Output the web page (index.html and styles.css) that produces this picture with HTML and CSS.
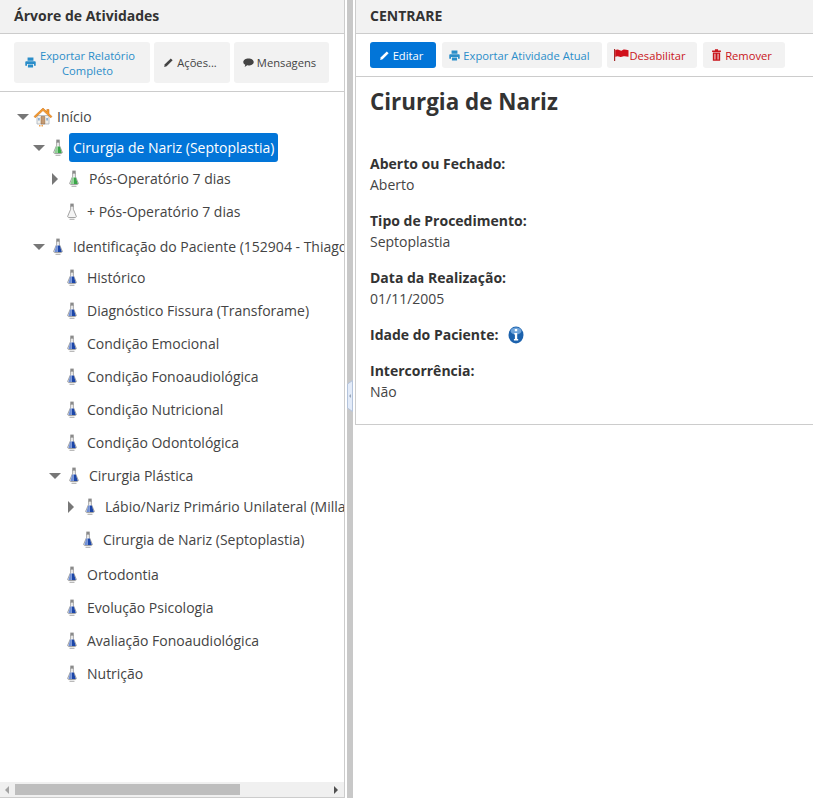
FILE: index.html
```html
<!DOCTYPE html>
<html lang="pt-BR">
<head>
  <meta charset="UTF-8">
  <title>Árvore de Atividades</title>
  <meta name="viewport" content="width=device-width, initial-scale=1.0">
  <link rel="stylesheet" href="styles.css">
</head>
<body>
  <svg class="defs" width="0" height="0">
    <symbol id="i-print" viewBox="0 0 12 12">
      <path d="M2.800.5h6.400v3.500H2.800zM1.300 4.500h9.400a1 1 0 0 1 1 1v4H9.800V7.500H2.200v2H.3v-4a1 1 0 0 1 1-1zM3.200 8.300h5.600v3.200H3.200z" fill="currentColor"/>
    </symbol>
    <symbol id="i-pencil" viewBox="0 0 12 12">
      <path d="M8.500 1.500l2 2L4 10 1.200 10.800 2 8z" fill="currentColor"/>
    </symbol>
    <symbol id="i-comment" viewBox="0 0 12 12">
      <path d="M6 1.500c3.100 0 5.700 1.600 5.700 3.900S9.100 9.200 6 9.200c-.5 0-1 0-1.400-.1L1.800 11l.7-2.500C1.100 7.800.3 6.700.3 5.400.3 3.100 2.900 1.500 6 1.500z" fill="currentColor"/>
    </symbol>
    <symbol id="i-trash" viewBox="0 0 12 13">
      <path d="M4.300.3h3.400v1.200h3.100v1.800H1.200V1.500h3.100zM2 3.900h8V12.700H2zM3.800 5.200v6.300h1V5.200zm3.400 0v6.300h1V5.200z" fill="currentColor" fill-rule="evenodd"/>
    </symbol>
    <symbol id="i-flag" viewBox="0 0 15 12">
      <path d="M0 0h1.200v12H0z" fill="#a52a2a"/>
      <path d="M1.200 1.200c1.500-.8 3-.8 4.500 0s2 .5 3-.2 2.800-.6 5.800.3V7.800c-3-.8-4.500-.8-5.800-.2s-2 .7-3 .1-3-.8-4.500.1z" fill="#d0101a"/>
    </symbol>
    <symbol id="i-flask" viewBox="0 0 12 18">
      <path d="M4.700 3h2.600v3.200L10.200 13c.3.800-.1 1.500-.9 1.500H2.700c-.8 0-1.200-.7-.9-1.500l2.900-6.800z" fill="#f4f4f4" stroke="#999" stroke-width=".9"/>
      <path d="M4.300.6h3.400v2.800H4.300z" fill="#8a8a8a"/>
      <path d="M3.500 15.700h5v1.200h-5z" fill="#b3b3b3"/>
    </symbol>
    <symbol id="i-flask-green" viewBox="0 0 12 18">
      <use href="#i-flask"/>
      <path d="M5.600 7.500h2.200l2 6.500H5.600z" fill="#3aa648"/>
      <path d="M4.200 7.500h1.400v6.500H2.400z" fill="#8fcf93"/>
    </symbol>
    <symbol id="i-flask-blue" viewBox="0 0 12 18">
      <use href="#i-flask"/>
      <path d="M5.600 7.500h2.200l2 6.500H5.600z" fill="#1c46a8"/>
      <path d="M4.200 7.500h1.400v6.500H2.400z" fill="#6f8fd6"/>
    </symbol>
    <symbol id="i-home" viewBox="0 0 20 20">
      <path d="M4 8.500h12V17H4z" fill="#f3f1ec" stroke="#a8b3bd" stroke-width=".8"/>
      <path d="M10 1L1 9.500l1.200 1.300L10 3.600l7.800 7.200L19 9.500l-3-2.800V2.500h-2.200v2.100z" fill="#f39a2e" stroke="#c9690f" stroke-width=".5"/>
      <path d="M8 9.500h3.800V17H8z" fill="#c49a73" stroke="#8c6239" stroke-width=".5"/>
      <path d="M5 11h1.800v2.500H5zM13.200 11H15v2.500h-1.800z" fill="#8fb1d6"/>
      <path d="M6 18h1.500v1.500H6zM8.500 18H10v1.500H8.500z" fill="#f2a34d"/>
    </symbol>
    <symbol id="i-info" viewBox="0 0 16 18">
      <ellipse cx="8" cy="9" rx="7.500" ry="8.500" fill="#1c62ad"/>
      <ellipse cx="8" cy="5" rx="5.500" ry="3.500" fill="#6fa4da"/>
      <path d="M6.800 3h2.400v2.200H6.800zM6.300 7h2.900v6h1v1.500H5.900V13h1V8.500h-.6z" fill="#fff"/>
    </symbol>
  </svg>

  <div class="layout">
    <div class="left-pane">
      <div class="pane-title">Árvore de Atividades</div>
      <div class="toolbar left-toolbar">
        <a class="btn btn-info btn-wide"><svg class="icon"><use href="#i-print"/></svg><span>Exportar Relatório<br>Completo</span></a>
        <a class="btn btn-acoes"><svg class="icon"><use href="#i-pencil"/></svg>Ações...</a>
        <a class="btn btn-msg"><svg class="icon"><use href="#i-comment"/></svg>Mensagens</a>
      </div>

      <div class="tree">
        <ul class="nodes root">
          <li>
            <div class="row"><i class="caret-down"></i><svg class="home"><use href="#i-home"/></svg><span class="label">Início</span></div>
            <ul class="nodes">
              <li>
                <div class="row"><i class="caret-down"></i><svg class="flask"><use href="#i-flask-green"/></svg><span class="label selected">Cirurgia de Nariz (Septoplastia)</span></div>
                <ul class="nodes">
                  <li><div class="row"><i class="caret-right"></i><svg class="flask"><use href="#i-flask-green"/></svg><span class="label">Pós-Operatório 7 dias</span></div></li>
                  <li><div class="row"><i class="leaf"></i><svg class="flask"><use href="#i-flask"/></svg><span class="label">+ Pós-Operatório 7 dias</span></div></li>
                </ul>
              </li>
              <li>
                <div class="row"><i class="caret-down"></i><svg class="flask"><use href="#i-flask-blue"/></svg><span class="label">Identificação do Paciente (152904 - Thiago</span></div>
                <ul class="nodes">
                  <li><div class="row"><i class="leaf"></i><svg class="flask"><use href="#i-flask-blue"/></svg><span class="label">Histórico</span></div></li>
                  <li><div class="row"><i class="leaf"></i><svg class="flask"><use href="#i-flask-blue"/></svg><span class="label">Diagnóstico Fissura (Transforame)</span></div></li>
                  <li><div class="row"><i class="leaf"></i><svg class="flask"><use href="#i-flask-blue"/></svg><span class="label">Condição Emocional</span></div></li>
                  <li><div class="row"><i class="leaf"></i><svg class="flask"><use href="#i-flask-blue"/></svg><span class="label">Condição Fonoaudiológica</span></div></li>
                  <li><div class="row"><i class="leaf"></i><svg class="flask"><use href="#i-flask-blue"/></svg><span class="label">Condição Nutricional</span></div></li>
                  <li><div class="row"><i class="leaf"></i><svg class="flask"><use href="#i-flask-blue"/></svg><span class="label">Condição Odontológica</span></div></li>
                  <li>
                    <div class="row"><i class="caret-down"></i><svg class="flask"><use href="#i-flask-blue"/></svg><span class="label">Cirurgia Plástica</span></div>
                    <ul class="nodes">
                      <li><div class="row"><i class="caret-right"></i><svg class="flask"><use href="#i-flask-blue"/></svg><span class="label">Lábio/Nariz Primário Unilateral (Milla</span></div></li>
                      <li><div class="row"><i class="leaf"></i><svg class="flask"><use href="#i-flask-blue"/></svg><span class="label">Cirurgia de Nariz (Septoplastia)</span></div></li>
                    </ul>
                  </li>
                  <li><div class="row"><i class="leaf"></i><svg class="flask"><use href="#i-flask-blue"/></svg><span class="label">Ortodontia</span></div></li>
                  <li><div class="row"><i class="leaf"></i><svg class="flask"><use href="#i-flask-blue"/></svg><span class="label">Evolução Psicologia</span></div></li>
                  <li><div class="row"><i class="leaf"></i><svg class="flask"><use href="#i-flask-blue"/></svg><span class="label">Avaliação Fonoaudiológica</span></div></li>
                  <li><div class="row"><i class="leaf"></i><svg class="flask"><use href="#i-flask-blue"/></svg><span class="label">Nutrição</span></div></li>
                </ul>
              </li>
            </ul>
          </li>
        </ul>
      </div>

      <div class="hscroll">
        <i class="scroll-left"></i>
        <div class="scroll-track"><div class="scroll-thumb"></div></div>
        <i class="scroll-right"></i>
      </div>
    </div>

    <div class="splitter">
      <svg class="split-handle" viewBox="0 0 6 32">
        <path d="M.5 4L5.500.5v31L.5 28z" fill="#e3ebf8" stroke="#b4c4dc"/>
        <path d="M2 16l2-2v4z" fill="#9aa7b8"/>
      </svg>
    </div>

    <div class="right-pane">
      <div class="pane-title">CENTRARE</div>
      <div class="toolbar right-toolbar">
        <a class="btn btn-primary"><svg class="icon"><use href="#i-pencil"/></svg>Editar</a>
        <a class="btn btn-info"><svg class="icon"><use href="#i-print"/></svg>Exportar Atividade Atual</a>
        <a class="btn btn-danger"><svg class="icon-flag"><use href="#i-flag"/></svg>Desabilitar</a>
        <a class="btn btn-danger"><svg class="icon-trash"><use href="#i-trash"/></svg>Remover</a>
      </div>
      <div class="details">
        <h1>Cirurgia de Nariz</h1>
        <div class="field"><strong>Aberto ou Fechado:</strong><p>Aberto</p></div>
        <div class="field"><strong>Tipo de Procedimento:</strong><p>Septoplastia</p></div>
        <div class="field"><strong>Data da Realização:</strong><p>01/11/2005</p></div>
        <div class="field field-inline"><strong>Idade do Paciente:</strong><svg class="info"><use href="#i-info"/></svg></div>
        <div class="field"><strong>Intercorrência:</strong><p>Não</p></div>
      </div>
    </div>
  </div>
</body>
</html>
```

FILE: styles.css
```css
* { box-sizing: border-box; }
html, body { height: 100%; }
body { margin: 0; font-family: "Open Sans", sans-serif; font-size: 14px; color: #333; background: #fff; overflow: hidden; }
.defs { position: absolute; }

.layout { display: flex; align-items: flex-start; height: 798px; }
.left-pane { width: 345px; height: 798px; display: flex; flex-direction: column; border-right: 1px solid #ccc; border-bottom: 1px solid #ccc; }
.right-pane { flex: 1; min-width: 0; border-left: 1px solid #ccc; border-bottom: 1px solid #ccc; height: 425px; }

.splitter { position: relative; width: 6px; height: 798px; margin: 0 2px; background: #c8c8c8; }
.split-handle { position: absolute; left: 0; top: 380px; width: 6px; height: 32px; }

.pane-title { height: 34px; padding: 0 14px; line-height: 32px; font-weight: 700; font-size: 14px; background: #f2f2f2; border-bottom: 1px solid #ccc; }

.toolbar { display: flex; gap: 4px; border-bottom: 1px solid #ccc; }
.left-toolbar { height: 58px; padding: 8px 14px; }
.right-toolbar { height: 43px; padding: 8px 14px; gap: 5.5px; }

.btn { display: flex; align-items: center; justify-content: center; height: 26px; padding: 0 10px 0 6px; background: #f2f2f2; border-radius: 3px; font-size: 11.2px; color: #444; line-height: 15px; white-space: nowrap; }
.left-toolbar .btn { height: 41px; }
.btn-wide { width: 136px; }
.btn-wide span { text-align: center; }
.btn-acoes { width: 76px; }
.btn-msg { width: 95px; }
.btn-primary { width: 66px; background: #0275d8; color: #fff; }
.btn-info { color: #2a8dc9; }
.btn-danger { color: #c9151b; }
.right-toolbar .btn-info { width: 160px; }
.right-toolbar .btn-danger { width: 90px; }
.right-toolbar .btn-danger:last-child { width: 82px; }

.icon { width: 11px; height: 11px; margin-right: 3px; flex: none; }
.btn-wide .icon { margin-right: 4px; }
.icon-flag { width: 15px; height: 12px; flex: none; }
.icon-trash { width: 11px; height: 12px; margin-right: 3px; flex: none; }

.tree { flex: 1; min-height: 0; overflow: hidden; padding: 8px 0 0 17px; }
.nodes { list-style: none; margin: -2px 0 2px; padding: 0 0 0 16px; }
.root { margin: 0; padding: 0; }
.row { display: flex; align-items: center; height: 33px; white-space: nowrap; }
.caret-down { flex: none; width: 16px; height: 6px; position: relative; }
.caret-down::before { content: ""; position: absolute; left: 0; top: 0; border-style: solid; border-width: 6px 6px 0; border-color: #777 transparent transparent; }
.caret-right { flex: none; width: 16px; height: 12px; position: relative; }
.caret-right::before { content: ""; position: absolute; left: 3px; top: 0; border-style: solid; border-width: 6px 0 6px 6px; border-color: transparent transparent transparent #777; }
.leaf { flex: none; width: 14px; }
.home { flex: none; width: 20px; height: 20px; }
.flask { flex: none; width: 12px; height: 18px; margin: 0 5px 0 3px; }
.label { padding: 0 4px; line-height: 29px; color: #444; }
.label.selected { background: #0275d8; color: #fff; border-radius: 3px; }

.hscroll { display: flex; align-items: center; height: 15px; flex: none; background: #f0f0f0; }
.scroll-left { flex: none; width: 15px; height: 8px; position: relative; }
.scroll-left::before { content: ""; position: absolute; left: 5px; top: 0; border-style: solid; border-width: 4px 4px 4px 0; border-color: transparent #a3a3a3 transparent transparent; }
.scroll-right { flex: none; width: 15px; height: 8px; position: relative; }
.scroll-right::before { content: ""; position: absolute; left: 5px; top: 0; border-style: solid; border-width: 4px 0 4px 4px; border-color: transparent transparent transparent #505050; }
.scroll-track { flex: 1; height: 11px; }
.scroll-thumb { width: 225px; height: 11px; background: #bebebe; }

.details { padding: 0 14px; }
h1 { margin: 0; padding: 8px 0 0; font-size: 22.4px; line-height: 34px; font-weight: 700; color: #333; }
.field { margin-bottom: 15px; line-height: 21px; }
.field strong { display: block; font-weight: 700; }
.field p { margin: 0; color: #444; }
.details h1 + .field { margin-top: 34px; }
.field-inline { display: flex; align-items: center; height: 21px; }
.info { width: 16px; height: 18px; margin-left: 10px; }
```
